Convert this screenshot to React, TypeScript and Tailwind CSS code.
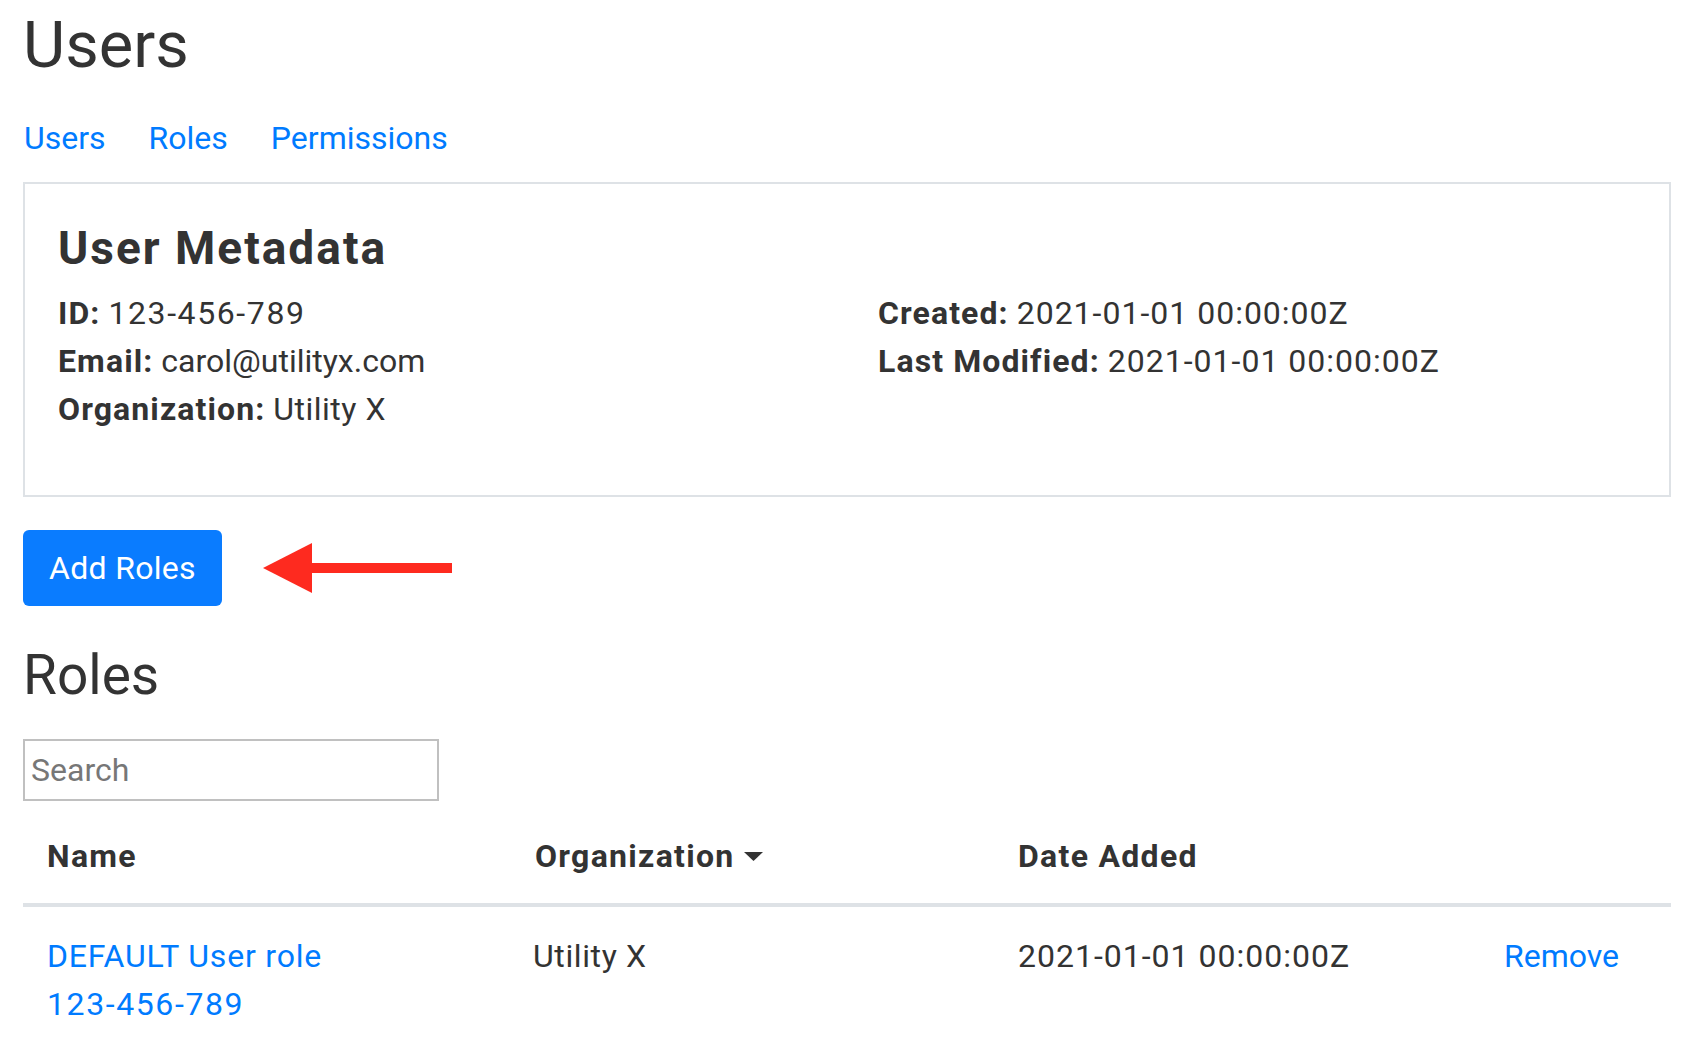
import React, { useState } from 'react';

const font = { fontFamily: 'Roboto, "Liberation Sans", sans-serif' };

function Caret() {
  return (
    <svg width="19" height="9" viewBox="0 0 19 9" className="ml-[9px] inline-block">
      <polygon points="0,0 19,0 9.5,9" fill="#333333" />
    </svg>
  );
}

function Arrow() {
  return (
    <svg width="190" height="50" viewBox="0 0 190 50" className="ml-[41px]">
      <polygon points="0,25 49,0 49,50" fill="#fe2a1f" />
      <rect x="48" y="20" width="141" height="10" fill="#fe2a1f" />
    </svg>
  );
}

function Field({ label, value, num }: { label: string; value: string; num?: string }) {
  return (
    <div>
      <b className="font-bold tracking-[1.1px]">{label}</b>{' '}
      <span className={num}>{value}</span>
    </div>
  );
}

export default function App() {
  const [query, setQuery] = useState('');

  return (
    <div className="min-h-screen bg-white pl-[23px] pr-[33px] text-[#333333]" style={font}>
      {/* Page title */}
      <h1 className="pt-[6px] text-[65px] leading-[78px] font-normal">Users</h1>

      {/* Sub navigation */}
      <nav className="mt-[30px] flex gap-[43px] pl-[1px] text-[32px] leading-[48px] text-[#007bff]">
        <a href="#">Users</a>
        <a href="#">Roles</a>
        <a href="#">Permissions</a>
      </nav>

      {/* Metadata card */}
      <section className="mt-[20px] border-2 border-[#dee2e6] pl-[33px] pt-[37px] pb-[62px]">
        <h4 className="text-[46px] leading-[54px] font-bold tracking-[2px]">User Metadata</h4>
        <div className="mt-[14px] grid grid-cols-[820px_1fr] text-[32px] leading-[48px]">
          <div>
            <Field label="ID:" value="123-456-789" num="tracking-[1.6px]" />
            <Field label="Email:" value="carol@utilityx.com" />
            <Field label="Organization:" value="Utility X" num="tracking-[0.5px]" />
          </div>
          <div>
            <Field label="Created:" value="2021-01-01 00:00:00Z" num="tracking-[1px]" />
            <Field label="Last Modified:" value="2021-01-01 00:00:00Z" num="tracking-[1px]" />
          </div>
        </div>
      </section>

      {/* Add roles action */}
      <div className="mt-[33px] flex items-center">
        <button
          type="button"
          className="h-[76px] w-[199px] rounded-[6px] bg-[#0a7cff] text-[32px] leading-[48px] tracking-[0.3px] text-white"
        >
          Add Roles
        </button>
        <Arrow />
      </div>

      {/* Roles list */}
      <h2 className="mt-[36px] text-[55px] leading-[66px] font-normal">Roles</h2>

      <input
        type="text"
        value={query}
        onChange={(e) => setQuery(e.target.value)}
        placeholder="Search"
        className="mt-[31px] block h-[62px] w-[416px] border-2 border-[#c0c0c0] px-[6px] text-[32px] leading-[48px] text-[#333333] placeholder:text-[#777777] outline-none"
      />

      <div className="mt-[7px]">
        <div className="grid grid-cols-[488px_483px_486px_1fr] border-b-4 border-[#dee2e6] pt-[24px] pb-[23px] text-[32px] leading-[48px] font-bold tracking-[1.3px]">
          <div className="px-[24px]">Name</div>
          <div className="flex items-center px-[24px]">
            Organization
            <Caret />
          </div>
          <div className="px-[24px]">Date Added</div>
          <div className="px-[24px]" />
        </div>
        <div className="grid grid-cols-[488px_483px_486px_1fr] pt-[25px] text-[32px] leading-[48px]">
          <div className="px-[24px]">
            <a href="#" className="block text-[#007bff] tracking-[0.8px]">DEFAULT User role</a>
            <a href="#" className="block text-[#007bff] tracking-[1.6px]">123-456-789</a>
          </div>
          <div className="px-[22px] tracking-[0.6px]">Utility X</div>
          <div className="px-[24px] tracking-[1px]">2021-01-01 00:00:00Z</div>
          <div className="px-[24px]">
            <a href="#" className="text-[#007bff]">Remove</a>
          </div>
        </div>
      </div>
    </div>
  );
}
